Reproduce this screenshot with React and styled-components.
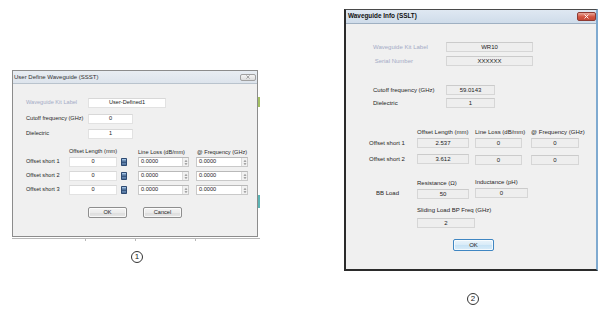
import React from "react";
import styled, { createGlobalStyle } from "styled-components";

const GlobalStyle = createGlobalStyle`
  html, body { margin: 0; padding: 0; background: #ffffff; }
  body { font-family: "Liberation Sans", Arial, sans-serif; color: #222; }
  * { box-sizing: border-box; }
`;

const Page = styled.div`
  display: flex;
  align-items: flex-start;
  width: 609px;
  height: 311px;
  overflow: hidden;
  background: #fff;
`;

const Column = styled.div`
  display: flex;
  flex-direction: column;
  margin-left: ${(p) => p.$ml}px;
  margin-top: ${(p) => p.$mt}px;
`;

const WindowRow = styled.div`
  display: flex;
  align-items: flex-start;
`;

const EdgeStrip = styled.div`
  display: flex;
  flex-direction: column;
  width: 2px;
`;

const EdgeSeg = styled.div`
  height: ${(p) => p.$h}px;
  background: ${(p) => p.$c || "transparent"};
`;

const BackdropLine = styled.div`
  display: flex;
  width: 248px;
  height: 3px;
  margin-top: 1px;
  border-top: 1px solid #b8b8b8;
`;

const Tick = styled.div`
  width: 1px;
  height: 2px;
  background: #b8b8b8;
  margin-left: ${(p) => p.$ml}px;
`;

const Dialog = styled.div`
  display: flex;
  flex-direction: column;
  width: ${(p) => p.$w}px;
  background: #f0f0f0;
  font-size: ${(p) => p.$fs}px;
  line-height: 1;
  ${(p) =>
    p.$active
      ? `border-left: 2px solid #2b2b2b; border-right: 2px solid #7faad0; border-top: 1px solid #4a4a4a; border-bottom: 2px solid #2b2b2b;`
      : `border: 1px solid #8c8c8c;`}
`;

const TitleBar = styled.div`
  display: flex;
  align-items: center;
  justify-content: space-between;
  height: ${(p) => p.$h}px;
  padding: 0 ${(p) => p.$pr}px 0 ${(p) => p.$pl}px;
  background: ${(p) =>
    p.$active
      ? "linear-gradient(#dfe8f2, #cfdcea)"
      : "linear-gradient(#e8edf2, #dde4ec)"};
  border-bottom: 1px solid ${(p) => (p.$active ? "#9fb0c2" : "#b9c3cd")};
`;

const TitleText = styled.span`
  font-size: ${(p) => p.$fs}px;
  font-weight: ${(p) => (p.$bold ? 700 : 400)};
  color: ${(p) => (p.$bold ? "#111" : "#333")};
  white-space: nowrap;
`;

const CloseButton = styled.div`
  display: flex;
  align-items: center;
  justify-content: center;
  width: ${(p) => p.$w}px;
  height: ${(p) => p.$h}px;
  border-radius: 2px;
  border: 1px solid ${(p) => (p.$red ? "#8e3a33" : "#a0a0a0")};
  background: ${(p) =>
    p.$red
      ? "linear-gradient(#e9a99c, #d2543f 55%, #c44a38)"
      : "linear-gradient(#f4f4f4, #dcdcdc)"};
`;

const Body = styled.div`
  display: flex;
  flex-direction: column;
  padding-bottom: ${(p) => p.$pb}px;
`;

const Row = styled.div`
  display: flex;
  align-items: center;
  margin-top: ${(p) => p.$mt || 0}px;
  padding-left: ${(p) => p.$pl || 0}px;
  height: ${(p) => p.$h || 10}px;
`;

const Label = styled.span`
  flex: none;
  width: ${(p) => p.$w}px;
  color: ${(p) => (p.$muted ? "#a4abc6" : "#262626")};
  white-space: nowrap;
  margin-left: ${(p) => p.$ml || 0}px;
`;

const Header = styled.span`
  flex: none;
  width: ${(p) => p.$w}px;
  color: #262626;
  white-space: nowrap;
  margin-top: ${(p) => p.$mt || 0}px;
`;

const Field = styled.div`
  flex: none;
  display: flex;
  align-items: center;
  justify-content: ${(p) => (p.$left ? "flex-start" : "center")};
  width: ${(p) => p.$w}px;
  height: ${(p) => p.$h || 10}px;
  margin-left: ${(p) => p.$ml || 0}px;
  margin-top: ${(p) => p.$mt || 0}px;
  padding-left: ${(p) => (p.$left ? 2 : 0)}px;
  background: ${(p) => (p.$ro ? "#eeeeee" : "#ffffff")};
  border: 1px solid ${(p) => (p.$ro ? "#d6d6d6" : p.$spin ? "#c9c9c9" : "#e2e2e2")};
  border-top-color: ${(p) => (p.$ro ? "#cbcbcb" : p.$spin ? "#b9b9b9" : "#d8d8d8")};
  color: #222;
  white-space: nowrap;
`;

const SpinValue = styled.span`
  flex: 1;
`;

const SpinBox = styled.div`
  display: flex;
  flex-direction: column;
  justify-content: center;
  align-items: center;
  width: 6px;
  height: 100%;
  background: #f1f1f1;
  border-left: 1px solid #dadada;
`;

const ButtonRow = styled.div`
  display: flex;
  margin-top: ${(p) => p.$mt}px;
  padding-left: ${(p) => p.$pl}px;
  gap: ${(p) => p.$gap || 0}px;
`;

const Button = styled.button`
  flex: none;
  width: ${(p) => p.$w}px;
  height: ${(p) => p.$h}px;
  padding: 0;
  font-family: inherit;
  font-size: inherit;
  line-height: 1;
  color: #222;
  border-radius: 2px;
  border: 1px solid ${(p) => (p.$default ? "#3f86c2" : "#8e8e8e")};
  background: ${(p) =>
    p.$default
      ? "linear-gradient(#eaf4fb, #d8ebf8 50%, #c6e2f5 51%, #d9ecf9)"
      : "linear-gradient(#f4f4f4, #ebebeb 50%, #dddddd 51%, #e6e6e6)"};
  box-shadow: inset 0 0 0 1px rgba(255, 255, 255, 0.7);
`;

const Marker = styled.div`
  display: flex;
  align-items: center;
  justify-content: center;
  width: 12px;
  height: 12px;
  margin-left: ${(p) => p.$ml}px;
  margin-top: ${(p) => p.$mt}px;
  border: 1px solid #333;
  border-radius: 50%;
  font-size: 8px;
  line-height: 1;
  color: #222;
`;

const CloseGlyph = ({ color, size }) => (
  <svg width={size} height={size} viewBox="0 0 6 6">
    <path d="M1 1 L5 5 M5 1 L1 5" stroke={color} strokeWidth="1.1" strokeLinecap="round" />
  </svg>
);

const SpinArrows = () => (
  <SpinBox>
    <svg width="4" height="7" viewBox="0 0 4 7">
      <path d="M0.5 2.8 L2 1 L3.5 2.8 Z" fill="#8a8a8a" />
      <path d="M0.5 4.2 L2 6 L3.5 4.2 Z" fill="#8a8a8a" />
    </svg>
  </SpinBox>
);

const CalcIcon = ({ ml }) => (
  <svg width="6" height="8" viewBox="0 0 6 8" style={{ marginLeft: ml, flex: "none" }}>
    <rect x="0" y="0" width="6" height="8" rx="0.8" fill="#2d4a72" />
    <rect x="1" y="1" width="4" height="1.6" fill="#9fc0e2" />
    <rect x="1" y="3.4" width="4" height="0.8" fill="#6f93bd" />
    <rect x="1" y="5" width="4" height="0.8" fill="#6f93bd" />
    <rect x="1" y="6.4" width="4" height="0.6" fill="#6f93bd" />
  </svg>
);

const Spin = ({ w, ml }) => (
  <Field $w={w} $ml={ml} $left $spin>
    <SpinValue>0.0000</SpinValue>
    <SpinArrows />
  </Field>
);

const OffsetRow1 = ({ n, mt }) => (
  <Row $mt={mt} $pl={13}>
    <Label $w={43}>Offset short {n}</Label>
    <Field $w={48}>0</Field>
    <CalcIcon ml={4} />
    <Spin w={51} ml={11} />
    <Spin w={52} ml={7} />
  </Row>
);

const UserDefineDialog = () => (
  <Dialog $w={246} $fs={5.6}>
    <TitleBar $h={13} $pl={1} $pr={1}>
      <TitleText $fs={6}>User Define Waveguide (SSST)</TitleText>
      <CloseButton $w={16} $h={7}>
        <CloseGlyph color="#8a8a8a" size={4} />
      </CloseButton>
    </TitleBar>
    <Body $pb={18}>
      <Row $mt={14} $pl={13}>
        <Label $w={62} $muted>Waveguide Kit Label</Label>
        <Field $w={78}>User-Defined1</Field>
      </Row>
      <Row $mt={6} $pl={13}>
        <Label $w={62}>Cutoff frequency (GHz)</Label>
        <Field $w={45}>0</Field>
      </Row>
      <Row $mt={5} $pl={13}>
        <Label $w={62}>Dielectric</Label>
        <Field $w={45}>1</Field>
      </Row>
      <Row $mt={9} $pl={56} $h={8}>
        <Header $w={69}>Offset Length (mm)</Header>
        <Header $w={59} $mt={1}>Line Loss (dB/mm)</Header>
        <Header $w={55} $mt={1}>@ Frequency (GHz)</Header>
      </Row>
      <OffsetRow1 n={1} mt={1} />
      <OffsetRow1 n={2} mt={4} />
      <OffsetRow1 n={3} mt={4} />
      <ButtonRow $mt={12} $pl={75} $gap={16}>
        <Button $w={39} $h={11}>OK</Button>
        <Button $w={39} $h={11}>Cancel</Button>
      </ButtonRow>
    </Body>
  </Dialog>
);

const InfoDialog = () => (
  <Dialog $w={254} $fs={6} $active>
    <TitleBar $h={14} $pl={2} $pr={0} $active>
      <TitleText $fs={6.4} $bold>Waveguide Info (SSLT)</TitleText>
      <CloseButton $w={19} $h={9} $red>
        <CloseGlyph color="#ffffff" size={5} />
      </CloseButton>
    </TitleBar>
    <Body $pb={18}>
      <Row $mt={18} $pl={27}>
        <Label $w={73} $muted>Waveguide Kit Label</Label>
        <Field $w={87} $ro>WR10</Field>
      </Row>
      <Row $mt={4} $pl={27}>
        <Label $w={73} $muted>&nbsp;Serial Number</Label>
        <Field $w={87} $ro>XXXXXX</Field>
      </Row>
      <Row $mt={19} $pl={27}>
        <Label $w={73}>Cutoff frequency (GHz)</Label>
        <Field $w={49} $ro>59.0143</Field>
      </Row>
      <Row $mt={3} $pl={27}>
        <Label $w={73}>Dielectric</Label>
        <Field $w={49} $ro>1</Field>
      </Row>
      <Row $mt={20} $pl={71} $h={7}>
        <Header $w={58}>Offset Length (mm)</Header>
        <Header $w={56}>Line Loss (dB/mm)</Header>
        <Header $w={58}>@ Frequency (GHz)</Header>
      </Row>
      <Row $mt={3} $pl={23}>
        <Label $w={48}>Offset short 1</Label>
        <Field $w={52} $ro>2.537</Field>
        <Field $w={47} $ml={6} $ro>0</Field>
        <Field $w={48} $ml={9} $ro>0</Field>
      </Row>
      <Row $mt={5} $pl={23} $h={12}>
        <Label $w={48}>Offset short 2</Label>
        <Field $w={52} $ro>3.612</Field>
        <Field $w={47} $ml={6} $mt={2} $ro>0</Field>
        <Field $w={48} $ml={9} $mt={2} $ro>0</Field>
      </Row>
      <Row $mt={13} $pl={71} $h={7}>
        <Header $w={58} $mt={2}>Resistance (Ω)</Header>
        <Header $w={60}>Inductance (pH)</Header>
      </Row>
      <Row $mt={2} $pl={30} $h={12}>
        <Label $w={41} >BB Load</Label>
        <Field $w={52} $mt={2} $ro>50</Field>
        <Field $w={53} $ml={6} $ro>0</Field>
      </Row>
      <Row $mt={7} $pl={71} $h={7}>
        <Header $w={100}>Sliding Load BP Freq (GHz)</Header>
      </Row>
      <Row $mt={5} $pl={71}>
        <Field $w={58} $ro>2</Field>
      </Row>
      <ButtonRow $mt={11} $pl={107}>
        <Button $w={41} $h={12} $default>OK</Button>
      </ButtonRow>
    </Body>
  </Dialog>
);

export default function App() {
  return (
    <>
      <GlobalStyle />
      <Page>
        <Column $ml={12} $mt={70}>
          <WindowRow>
            <UserDefineDialog />
            <EdgeStrip>
              <EdgeSeg $h={27} />
              <EdgeSeg $h={10} $c="#a3bf63" />
              <EdgeSeg $h={88} />
              <EdgeSeg $h={13} $c="#5cb4b4" />
            </EdgeStrip>
          </WindowRow>
          <BackdropLine>
            <Tick $ml={73} />
            <Tick $ml={49} />
            <Tick $ml={59} />
          </BackdropLine>
          <Marker $ml={119} $mt={10}>1</Marker>
        </Column>
        <Column $ml={84} $mt={9}>
          <InfoDialog />
          <Marker $ml={123} $mt={22}>2</Marker>
        </Column>
      </Page>
    </>
  );
}
